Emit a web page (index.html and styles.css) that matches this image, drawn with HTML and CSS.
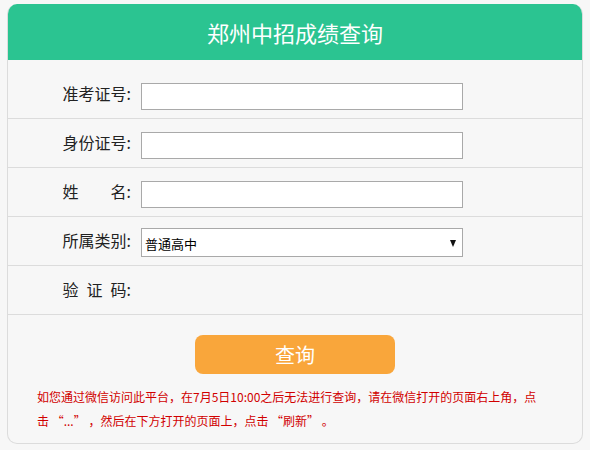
FILE: index.html
```html
<!DOCTYPE html>
<html lang="zh-CN">
<head>
<meta charset="utf-8">
<title>郑州中招成绩查询</title>
<link rel="stylesheet" href="styles.css">
</head>
<body>
<div class="card">
  <div class="card-header">郑州中招成绩查询</div>
  <form class="form">
    <div class="row">
      <label class="label">准考证号:</label>
      <input class="field" type="text">
    </div>
    <div class="row">
      <label class="label">身份证号:</label>
      <input class="field" type="text">
    </div>
    <div class="row">
      <label class="label">姓　　名:</label>
      <input class="field" type="text">
    </div>
    <div class="row">
      <label class="label">所属类别:</label>
      <div class="select-wrap">
        <select class="select">
          <option>普通高中</option>
        </select>
      </div>
    </div>
    <div class="row">
      <label class="label">验&ensp;证&ensp;码:</label>
    </div>
    <div class="actions">
      <button class="btn" type="button">查询</button>
    </div>
    <p class="note">如您通过微信访问此平台，在7月5日10:00之后无法进行查询，请在微信打开的页面右上角，点击 “...” ，然后在下方打开的页面上，点击 “刷新” 。</p>
  </form>
</div>
</body>
</html>
```

FILE: styles.css
```css
html, body {
  margin: 0;
  padding: 0;
  background: #f7f7f7;
}
body {
  padding: 4px 7px 0 7px;
  font-family: "Noto Sans CJK SC", "Noto Sans", sans-serif;
  color: #222;
}
.card {
  background: #f7f7f7;
  border: 1px solid #dcdcdc;
  border-top: none;
  border-radius: 10px;
  overflow: hidden;
}
.card-header {
  background: #2bc491;
  color: #fff;
  font-size: 22px;
  height: 56px;
  line-height: 56px;
  text-align: center;
  margin: 0 -1px;
}
.form {
  margin: 0;
  padding-top: 10px;
}
.row {
  display: flex;
  align-items: flex-start;
  height: 35px;
  padding-top: 13px;
  border-bottom: 1px solid #dcdcdc;
}
.label {
  width: 123px;
  text-align: right;
  font-size: 16px;
  line-height: 20px;
  color: #222;
  margin-right: 10px;
  white-space: pre;
}
.field {
  box-sizing: border-box;
  width: 322px;
  height: 27px;
  margin: 0;
  border: 1px solid #a9a9a9;
  background: #fff;
  padding: 0 4px;
  font-family: inherit;
  font-size: 13px;
  outline: none;
}
.select-wrap {
  position: relative;
  margin-top: -2px;
  width: 322px;
  height: 29px;
}
.select {
  box-sizing: border-box;
  width: 322px;
  height: 29px;
  margin: 0;
  border: 1px solid #a9a9a9;
  background: #fff;
  padding: 2px 0 0 3px;
  font-family: "Noto Sans CJK SC", sans-serif;
  font-size: 13px;
  color: #000;
  appearance: none;
  -webkit-appearance: none;
  border-radius: 0;
  outline: none;
}
.select-wrap::after {
  content: "";
  position: absolute;
  right: 7px;
  top: 12px;
  width: 0;
  height: 0;
  border-left: 3.5px solid transparent;
  border-right: 3.5px solid transparent;
  border-top: 7px solid #111;
  pointer-events: none;
}
.actions {
  display: flex;
  justify-content: center;
  padding-top: 20px;
}
.btn {
  width: 200px;
  height: 39px;
  border: none;
  border-radius: 8px;
  background: #f9a63b;
  color: #fff;
  font-family: "Noto Sans CJK SC", sans-serif;
  font-size: 20px;
  line-height: 39px;
  padding: 0;
}
.note {
  margin: 11px 0 0 0;
  padding: 0 40px 10px 29px;
  color: #d10000;
  font-size: 12px;
  line-height: 24px;
}
```
